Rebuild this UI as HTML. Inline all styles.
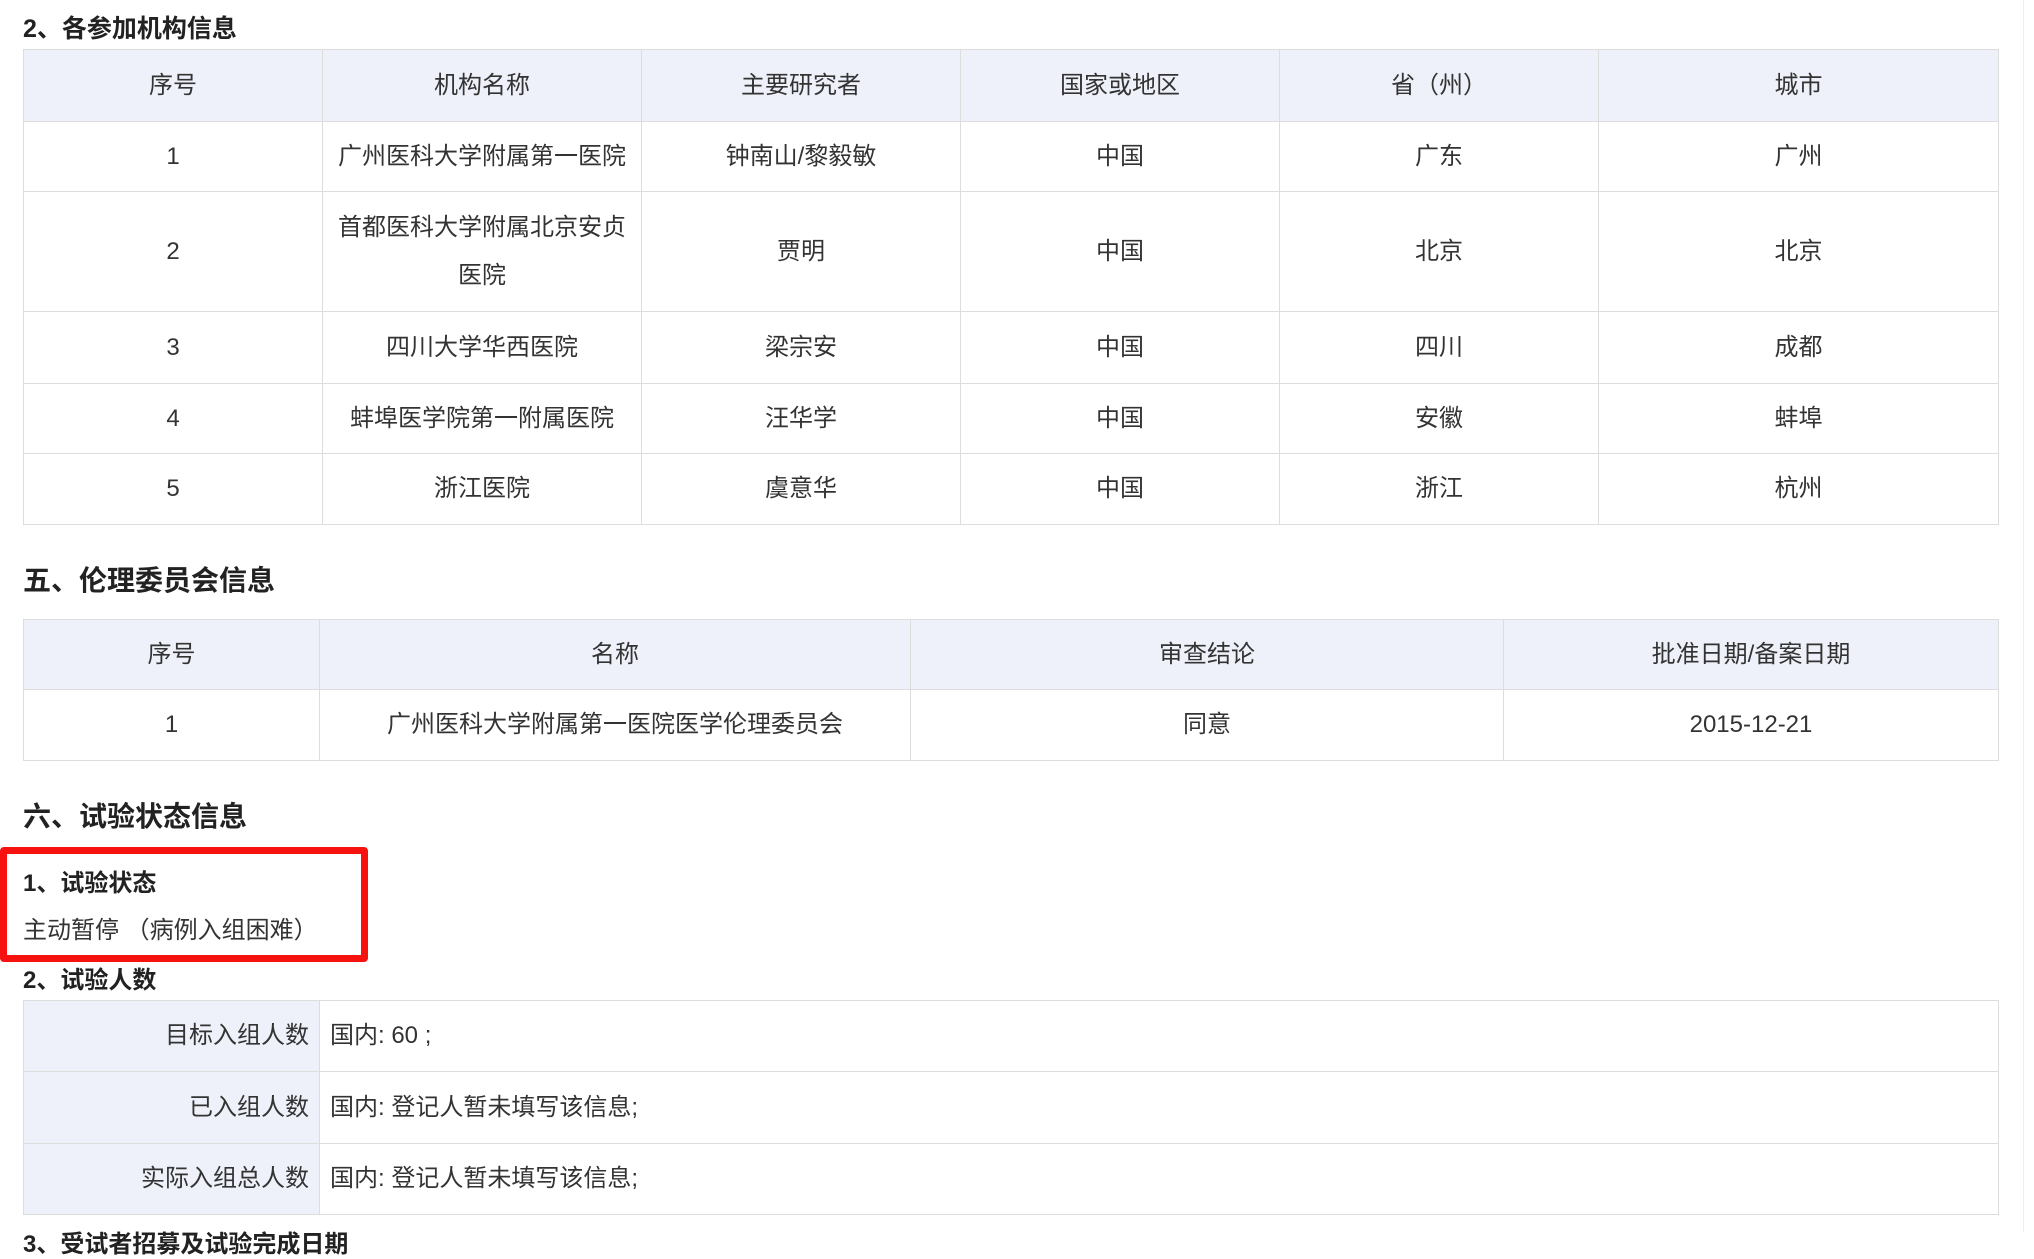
<!DOCTYPE html>
<html><head><meta charset="utf-8"><style>
*{margin:0;padding:0;box-sizing:border-box}
body{width:2034px;height:1232px;overflow:hidden;background:#fff;font-family:"Liberation Sans","Noto Sans CJK SC",sans-serif;color:#333;position:relative}
.h{position:absolute;left:23px;font-weight:bold;color:#222;white-space:nowrap}
table{position:absolute;left:23px;border-collapse:collapse;font-size:24px;table-layout:fixed}
td{border:1px solid #ddd;text-align:center;line-height:48px;padding:0 8px}
tr.hd td{background:#eef1f9}
td.l{background:#eef1f9;text-align:right;padding-right:10px}
td.r{text-align:left;padding-left:10px}
</style></head><body>
<div style="position:absolute;left:2023px;top:0;width:1px;height:1232px;background:#eee"></div>
<div class="h" style="top:9px;font-size:25px">2、各参加机构信息</div>
<table style="top:49px;width:1975px">
<colgroup><col style="width:299px"><col style="width:319px"><col style="width:319px"><col style="width:319px"><col style="width:319px"><col style="width:400px"></colgroup>
<tr class="hd" style="height:72px"><td>序号</td><td>机构名称</td><td>主要研究者</td><td>国家或地区</td><td>省（州）</td><td>城市</td></tr>
<tr style="height:70px"><td>1</td><td>广州医科大学附属第一医院</td><td>钟南山/黎毅敏</td><td>中国</td><td>广东</td><td>广州</td></tr>
<tr style="height:120px"><td>2</td><td>首都医科大学附属北京安贞医院</td><td>贾明</td><td>中国</td><td>北京</td><td>北京</td></tr>
<tr style="height:72px"><td>3</td><td>四川大学华西医院</td><td>梁宗安</td><td>中国</td><td>四川</td><td>成都</td></tr>
<tr style="height:70px"><td>4</td><td>蚌埠医学院第一附属医院</td><td>汪华学</td><td>中国</td><td>安徽</td><td>蚌埠</td></tr>
<tr style="height:71px"><td>5</td><td>浙江医院</td><td>虞意华</td><td>中国</td><td>浙江</td><td>杭州</td></tr>
</table>
<div class="h" style="top:559px;font-size:28px">五、伦理委员会信息</div>
<table style="top:619px;width:1975px">
<colgroup><col style="width:296px"><col style="width:591px"><col style="width:593px"><col style="width:495px"></colgroup>
<tr class="hd" style="height:70px"><td>序号</td><td>名称</td><td>审查结论</td><td>批准日期/备案日期</td></tr>
<tr style="height:71px"><td>1</td><td>广州医科大学附属第一医院医学伦理委员会</td><td>同意</td><td>2015-12-21</td></tr>
</table>
<div class="h" style="top:795px;font-size:28px">六、试验状态信息</div>
<div style="position:absolute;left:0;top:847px;width:368px;height:115px;border:7px solid #f5120f;border-radius:4px"></div>
<div class="h" style="top:863px;font-size:24px">1、试验状态</div>
<div style="position:absolute;left:23px;top:910px;font-size:24px;white-space:nowrap">主动暂停 （病例入组困难）</div>
<div class="h" style="top:960px;font-size:24px">2、试验人数</div>
<table style="top:1000px;width:1975px">
<colgroup><col style="width:296px"><col style="width:1679px"></colgroup>
<tr style="height:71px"><td class="l">目标入组人数</td><td class="r">国内: 60 ;</td></tr>
<tr style="height:72px"><td class="l">已入组人数</td><td class="r">国内: 登记人暂未填写该信息;</td></tr>
<tr style="height:71px"><td class="l">实际入组总人数</td><td class="r">国内: 登记人暂未填写该信息;</td></tr>
</table>
<div class="h" style="top:1224px;font-size:24px">3、受试者招募及试验完成日期</div>
</body></html>
